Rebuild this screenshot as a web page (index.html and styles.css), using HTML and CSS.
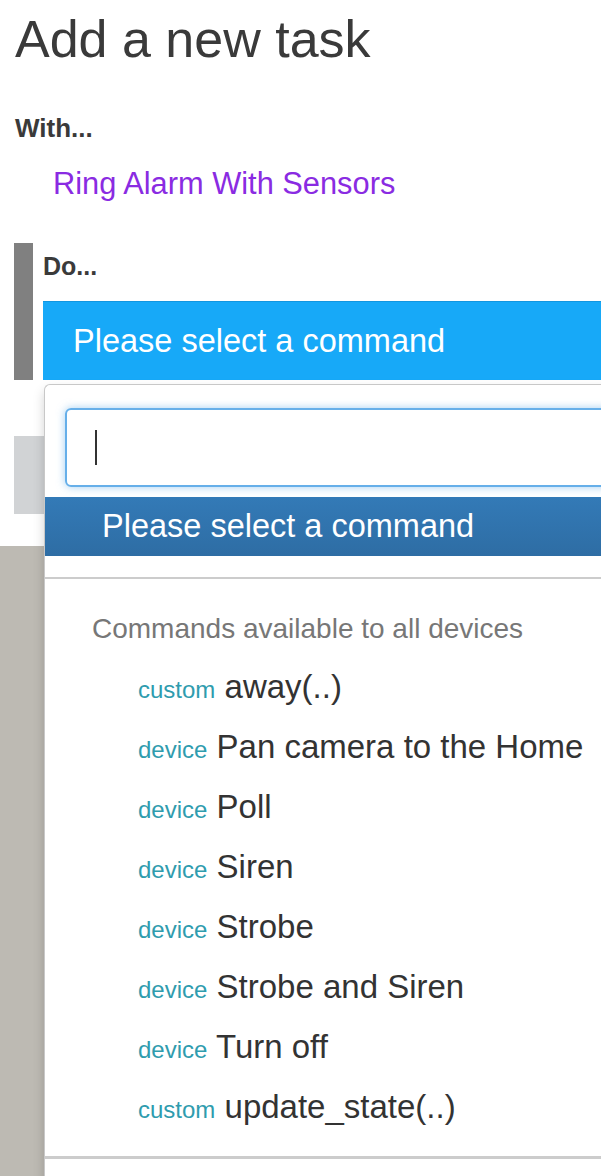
FILE: index.html
```html
<!DOCTYPE html>
<html lang="en">
<head>
  <meta charset="UTF-8">
  <meta name="viewport" content="width=device-width, initial-scale=1.0">
  <title>Add a new task</title>
  <link rel="stylesheet" href="styles.css">
</head>
<body>
  <h1>Add a new task</h1>
  <h4 class="step-title">With...</h4>
  <div class="device-name">Ring Alarm With Sensors</div>

  <div class="step-do">
    <h4 class="step-title">Do...</h4>
    <div class="command-select">
      <div class="select-box">Please select a command</div>

      <div class="select-dropdown">
        <div class="search-wrap">
          <div class="search-input"><span class="caret"></span></div>
        </div>
        <ul class="options">
          <li class="option highlighted">Please select a command</li>
          <li class="option blank"></li>
          <li class="group">
            <div class="group-label">Commands available to all devices</div>
            <ul class="group-items">
              <li class="option"><span class="kind">custom</span> away(..)</li>
              <li class="option"><span class="kind">device</span> Pan camera to the Home</li>
              <li class="option"><span class="kind">device</span> Poll</li>
              <li class="option"><span class="kind">device</span> Siren</li>
              <li class="option"><span class="kind">device</span> Strobe</li>
              <li class="option"><span class="kind">device</span> Strobe and Siren</li>
              <li class="option"><span class="kind">device</span> Turn off</li>
              <li class="option"><span class="kind">custom</span> update_state(..)</li>
            </ul>
          </li>
        </ul>
      </div>
    </div>
  </div>

  <div class="add-button"></div>
  <div class="page-footer"></div>
</body>
</html>
```

FILE: styles.css
```css
body {
  margin: 0;
  font-family: "Liberation Sans", Arial, sans-serif;
  color: #333;
  background: #fff;
  overflow: hidden;
}

h1 {
  margin: 11px 0 0 15px;
  font-size: 52px;
  line-height: 57px;
  font-weight: normal;
  color: #3a3a3a;
}

.step-title {
  margin: 45px 0 0 15px;
  font-size: 26px;
  line-height: 30px;
  font-weight: bold;
  color: #3a3a3a;
}

.device-name {
  margin: 23px 0 0 53px;
  font-size: 30.8px;
  line-height: 36px;
  color: #8a2be2;
}

.step-do {
  margin: 41px 0 0 14px;
  padding: 8px 0 0 10px;
  border-left: 19px solid #808080;
}

.step-do .step-title {
  margin: 0;
  font-size: 25px;
}

.command-select {
  position: relative;
  margin-top: 20px;
}

.select-box {
  height: 78px;
  padding-left: 30px;
  border-top: 1px solid #1296e0;
  background: #17a9f8;
  color: #fff;
  font-size: 32.5px;
  line-height: 78px;
}

/* open dropdown, lies over the rest of the page */
.select-dropdown {
  position: absolute;
  top: calc(100% + 4px);
  left: 1px;
  width: 700px;
  padding-bottom: 60px;
  background: #fff;
  border: 1px solid #c8c8c8;
  border-right: none;
  border-top-left-radius: 6px;
  box-shadow: 0 6px 12px rgba(0, 0, 0, 0.175);
  z-index: 10;
}

.search-wrap {
  padding: 23px 0 10px 20px;
}

.search-input {
  height: 75px;
  border: 2px solid #66afe9;
  border-radius: 6px;
  box-shadow: 0 0 8px rgba(102, 175, 233, 0.6);
  display: flex;
  align-items: center;
  padding-left: 28px;
}

.caret {
  width: 2px;
  height: 35px;
  background: #333;
}

.options {
  list-style: none;
  margin: 0;
  padding: 0;
}

.option {
  height: 60px;
  line-height: 60px;
  font-size: 33px;
  color: #333;
  white-space: nowrap;
}

.option.highlighted {
  height: 59px;
  line-height: 59px;
  padding-left: 57px;
  font-size: 32.5px;
  color: #fff;
  background: linear-gradient(to bottom, #337ab7 0, #2e6da4 100%);
}

.option.blank {
  height: 21px;
  border-bottom: 2px solid #ccc;
}

.group {
  padding: 30px 0 19px;
  border-bottom: 3px solid #ccc;
}

.group-label {
  padding-left: 47px;
  font-size: 28px;
  line-height: 40px;
  color: #777;
}

.group-items {
  list-style: none;
  margin: 8px 0 0;
  padding: 0;
}

.group-items .option {
  padding-left: 93px;
}

.kind {
  font-size: 24px;
  color: #2f9cae;
}

.add-button {
  margin: 56px 0 0 14px;
  width: 300px;
  height: 78px;
  background: #d1d3d5;
}

.page-footer {
  margin-top: 32px;
  height: 700px;
  background: #bdbab3;
}
```
